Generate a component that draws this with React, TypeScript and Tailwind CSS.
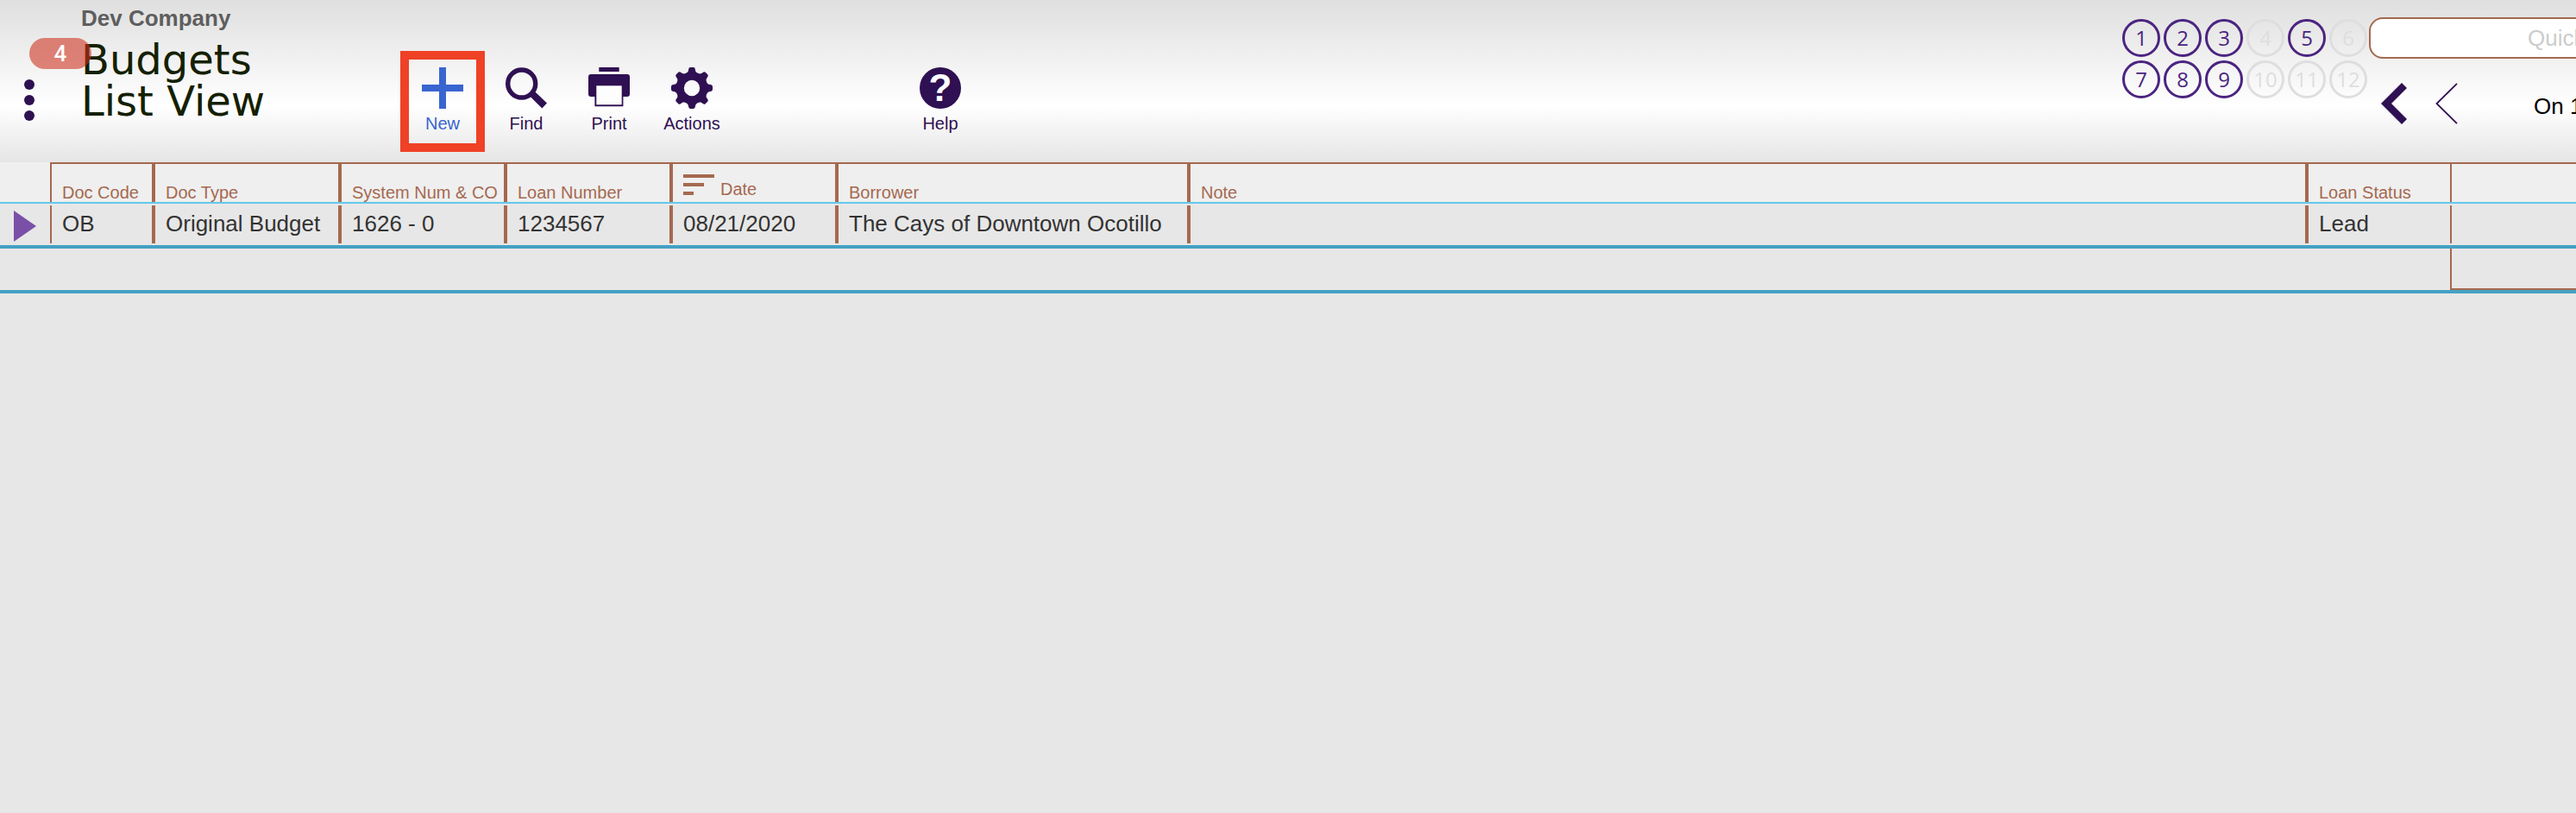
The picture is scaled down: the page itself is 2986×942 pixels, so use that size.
import type { ReactNode } from "react";
import { clsx } from "clsx";

type ToolButtonProps = {
  label: string;
  highlighted?: boolean;
  children: ReactNode;
};

const windows = [
  { id: 1, open: true },
  { id: 2, open: true },
  { id: 3, open: true },
  { id: 4, open: false },
  { id: 5, open: true },
  { id: 6, open: false },
  { id: 7, open: true },
  { id: 8, open: true },
  { id: 9, open: true },
  { id: 10, open: false },
  { id: 11, open: false },
  { id: 12, open: false },
];

const columns = [
  { label: "Doc Code", value: "OB", width: "w-[122px]", edge: "border-l-2 border-r-4 pl-3" },
  { label: "Doc Type", value: "Original Budget", width: "w-[216px]", edge: "border-r-4 pl-3" },
  { label: "System Num & CO", value: "1626 - 0", width: "w-[192px]", edge: "border-r-4 pl-3" },
  { label: "Loan Number", value: "1234567", width: "w-[192px]", edge: "border-r-4 pl-3" },
  { label: "Date", value: "08/21/2020", width: "w-[192px]", edge: "border-r-4 pl-3", sorted: true },
  { label: "Borrower", value: "The Cays of Downtown Ocotillo", width: "w-[408px]", edge: "border-r-4 pl-3" },
  { label: "Note", value: "", width: "w-auto", edge: "border-r-4 pl-3" },
  { label: "Loan Status", value: "Lead", width: "w-[164px]", edge: "pl-3" },
];

const toothAngles = [0, 45, 90, 135, 180, 225, 270, 315];

function PlusIcon() {
  return (
    <svg viewBox="0 0 48 48" className="size-12" fill="currentColor" aria-hidden="true">
      <path d="M20 0h8v20h20v8H28v20h-8V28H0v-8h20z" />
    </svg>
  );
}

function FindIcon() {
  return (
    <svg viewBox="0 0 48 48" className="size-12" aria-hidden="true">
      <circle cx="18.7" cy="19" r="16" fill="none" stroke="currentColor" strokeWidth="5.4" />
      <path d="M29 34.2 34.4 28.4 48 41.4 42.3 47.4z" fill="currentColor" />
    </svg>
  );
}

function PrintIcon() {
  return (
    <svg viewBox="0 0 48 48" className="size-12" fill="currentColor" aria-hidden="true">
      <path d="M12.3 0h23.4v5H12.3z" />
      <path d="M3 8h42a3 3 0 0 1 3 3v20a3 3 0 0 1-3 3h-4.6v11.3H7.4V34H3a3 3 0 0 1-3-3V11a3 3 0 0 1 3-3z" />
      <path d="M9.3 21.3h29.4v22H9.3z" fill="#fdfdfd" />
    </svg>
  );
}

function GearIcon() {
  return (
    <svg viewBox="-24 -24 48 48" className="size-12" aria-hidden="true">
      <circle r="13.7" fill="none" stroke="currentColor" strokeWidth="9" />
      {toothAngles.map((angle) => (
        <path
          key={angle}
          d="M-8 -16.4C-5 -18 -4 -19 -3.9 -21.6Q-3.6 -24 -1.8 -24H1.8Q3.6 -24 3.9 -21.6C4 -19 5 -18 8 -16.4L5 -13H-5z"
          transform={`rotate(${angle})`}
          fill="currentColor"
        />
      ))}
    </svg>
  );
}

function ToolButton({ label, highlighted, children }: ToolButtonProps) {
  return (
    <button
      type="button"
      className={clsx(
        "flex w-24 flex-col items-center gap-[3px] text-xl leading-7",
        highlighted ? "text-[#3865d0]" : "text-[#2f1052]",
      )}
    >
      {children}
      {label}
    </button>
  );
}

function Toolbar() {
  return (
    <nav aria-label="Layout actions" className="flex pt-[59px]">
      <div className="flex h-[117px] w-[98px] justify-center border-10 border-[#ef4126] pt-[9px]">
        <ToolButton label="New" highlighted>
          <PlusIcon />
        </ToolButton>
      </div>
      <div className="flex pt-[19px]">
        <ToolButton label="Find">
          <FindIcon />
        </ToolButton>
        <ToolButton label="Print">
          <PrintIcon />
        </ToolButton>
        <ToolButton label="Actions">
          <GearIcon />
        </ToolButton>
        <div className="ml-48">
          <ToolButton label="Help">
            <span className="flex size-12 items-center justify-center rounded-full bg-[#2f1052] text-[44px] font-bold leading-12 text-white">
              ?
            </span>
          </ToolButton>
        </div>
      </div>
    </nav>
  );
}

function WindowPicker() {
  return (
    <div className="mt-[22px] grid grid-cols-6 gap-1 self-start">
      {windows.map((item) => (
        <button
          key={item.id}
          type="button"
          disabled={!item.open}
          className={clsx(
            "flex size-11 items-center justify-center rounded-full border-3 font-['Open_Sans',sans-serif] text-2xl leading-8 font-medium",
            item.open ? "border-[#4b2480] text-[#4b2480]" : "border-[#dedede] text-[#dedede]",
          )}
        >
          {item.id}
        </button>
      ))}
    </div>
  );
}

function RecordNavigation() {
  return (
    <div className="w-60 shrink-0 pt-5">
      <input
        type="search"
        aria-label="Quick find"
        placeholder="Quick"
        className="block h-12 w-[480px] rounded-2xl border-2 border-[#a5694f] bg-white pl-[182px] text-[26px] outline-none placeholder:text-[#cccccc]"
      />
      <div className="flex items-center pt-7 pl-3.5 text-[#2f1052]">
        <button type="button" aria-label="First record">
          <svg viewBox="0 0 30 48" className="h-12 w-[30px]" fill="currentColor" aria-hidden="true">
            <path d="M24 0 30 6 12 24 30 42 24 48 0 24z" />
          </svg>
        </button>
        <button type="button" aria-label="Previous record" className="ml-8">
          <svg viewBox="0 0 28 48" className="h-12 w-7" fill="none" stroke="currentColor" strokeWidth="1.8" aria-hidden="true">
            <path d="M26 .8 2.5 24 26 47.2" />
          </svg>
        </button>
        <span className="ml-[87px] pt-1.5 text-[26px] leading-8 whitespace-nowrap text-black">On 1</span>
      </div>
    </div>
  );
}

function Header() {
  return (
    <header className="flex h-[188px] overflow-hidden bg-linear-to-b from-[#dfdfdf] via-white via-65% to-[#e5e5e5]">
      <div className="relative w-[464px] shrink-0 pl-[94px]">
        <p className="pt-[7px] text-[26px] leading-7 font-bold text-[#5e5e5e]">Dev Company</p>
        <h1 className="pt-2.5 font-['DejaVu_Sans',sans-serif] text-5xl leading-12 whitespace-nowrap text-[#142000]">
          Budgets
          <br />
          List View
        </h1>
        <span className="absolute top-11 left-[34px] flex h-9 w-[72px] items-center justify-center rounded-full bg-[#cd2f1b]/58 font-[Roboto,sans-serif] text-[26px] font-medium text-white">
          4
        </span>
        <button type="button" aria-label="Menu" className="absolute top-[92px] left-7 flex flex-col gap-1.5">
          <span className="size-3 rounded-full bg-[#2f1052]" />
          <span className="size-3 rounded-full bg-[#2f1052]" />
          <span className="size-3 rounded-full bg-[#2f1052]" />
        </button>
      </div>
      <Toolbar />
      <div className="ml-auto flex shrink-0 gap-[2px]">
        <WindowPicker />
        <RecordNavigation />
      </div>
    </header>
  );
}

function SortIcon() {
  return (
    <svg viewBox="0 0 36 24" className="mb-1 h-6 w-9" fill="currentColor" aria-hidden="true">
      <path d="M0 0h36v4H0zM0 10h24v4H0zM0 20h12v4H0z" />
    </svg>
  );
}

function BudgetTable() {
  return (
    <table className="w-full table-fixed border-separate border-spacing-0 text-left">
      <thead className="bg-[#efefef] text-xl leading-[22px] text-[#a5694f]">
        <tr>
          <th className="w-[58px] border-b-2 border-[#62c8ea] p-0" aria-label="Selected" />
          {columns.map((column) => (
            <th key={column.label} className={clsx("border-b-2 border-[#62c8ea] p-0 font-normal", column.width)}>
              <div className={clsx("flex h-[46px] items-end border-t-2 border-[#a5694f] whitespace-nowrap", column.edge)}>
                {column.sorted ? (
                  <span className="flex items-end gap-[7px] pb-1">
                    <SortIcon />
                    {column.label}
                  </span>
                ) : (
                  column.label
                )}
              </div>
            </th>
          ))}
          <th className="w-[146px] border-b-2 border-[#62c8ea] p-0" aria-label="Amount">
            <div className="h-[46px] border-t-2 border-l-2 border-[#a5694f]" />
          </th>
        </tr>
      </thead>
      <tbody className="text-[26px] leading-[42px] text-[#333333]">
        <tr>
          <td className="border-b-4 border-[#44a1c4] p-0">
            <svg viewBox="0 0 26 36" className="mt-1 ml-4 h-9 w-[26px]" fill="#7a4fa8" aria-hidden="true">
              <path d="M0 0 26 18 0 36z" />
            </svg>
          </td>
          {columns.map((column) => (
            <td key={column.label} className="border-b-4 border-[#44a1c4] p-0">
              <div className={clsx("my-0.5 h-11 border-[#a5694f] whitespace-nowrap", column.edge)}>{column.value}</div>
            </td>
          ))}
          <td className="border-b-4 border-[#44a1c4] p-0">
            <div className="my-0.5 h-11 border-l-2 border-[#a5694f]" />
          </td>
        </tr>
        <tr>
          <td colSpan={9} className="border-b-4 border-[#44a1c4] p-0" />
          <td className="border-b-4 border-[#44a1c4] p-0">
            <div className="h-12 border-b-2 border-l-2 border-[#a5694f]" />
          </td>
        </tr>
      </tbody>
    </table>
  );
}

export default function App() {
  return (
    <main className="min-h-screen overflow-x-hidden bg-[#e7e7e7] font-['Liberation_Sans',Arial,sans-serif]">
      <Header />
      <BudgetTable />
    </main>
  );
}
